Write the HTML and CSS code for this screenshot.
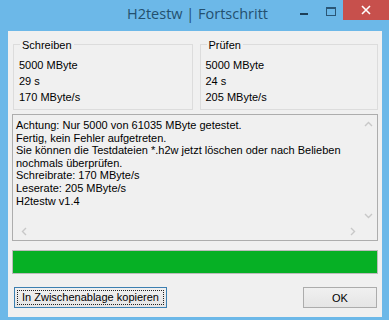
FILE: index.html
```html
<!DOCTYPE html>
<html lang="de">

<head>
    <meta charset="UTF-8">
    <link rel="stylesheet" href="styles.css">
    <title>H2testw | Fortschritt</title>
</head>

<body>
    <div class="window">
        <div class="titlebar">
            <span class="title">H2testw | Fortschritt</span>
            <div class="caption-btns">
                <span class="cap-min"></span>
                <span class="cap-max"></span>
                <span class="cap-close">
                    <svg width="10" height="10" viewBox="0 0 10 10">
                        <path d="M1 1 L9 9 M9 1 L1 9" stroke="#ffffff" stroke-width="1.6" />
                    </svg>
                </span>
            </div>
        </div>

        <div class="client">
            <div class="groups">
                <div class="group group-write">
                    <span class="group-label">Schreiben</span>
                    <div>5000 MByte</div>
                    <div>29 s</div>
                    <div>170 MByte/s</div>
                </div>
                <div class="group group-verify">
                    <span class="group-label">Prüfen</span>
                    <div>5000 MByte</div>
                    <div>24 s</div>
                    <div>205 MByte/s</div>
                </div>
            </div>

            <div class="log">
                <div class="log-text">
                    <div>Achtung: Nur 5000 von 61035 MByte getestet.</div>
                    <div>Fertig, kein Fehler aufgetreten.</div>
                    <div>Sie können die Testdateien *.h2w jetzt löschen oder nach Belieben</div>
                    <div>nochmals überprüfen.</div>
                    <div>Schreibrate: 170 MByte/s</div>
                    <div>Leserate: 205 MByte/s</div>
                    <div>H2testw v1.4</div>
                </div>
                <div class="vscroll">
                    <svg width="9" height="6" viewBox="0 0 9 6">
                        <path d="M1 5 L4.5 1.5 L8 5" fill="none" stroke="#c8c8c8" stroke-width="1.4" />
                    </svg>
                    <svg width="9" height="6" viewBox="0 0 9 6">
                        <path d="M1 1 L4.5 4.5 L8 1" fill="none" stroke="#c8c8c8" stroke-width="1.4" />
                    </svg>
                </div>
                <div class="hscroll">
                    <svg width="6" height="9" viewBox="0 0 6 9">
                        <path d="M5 1 L1.5 4.5 L5 8" fill="none" stroke="#c8c8c8" stroke-width="1.4" />
                    </svg>
                    <svg width="6" height="9" viewBox="0 0 6 9">
                        <path d="M1 1 L4.5 4.5 L1 8" fill="none" stroke="#c8c8c8" stroke-width="1.4" />
                    </svg>
                </div>
            </div>

            <div class="progress">
                <div class="progress-fill" style="width: 100%"></div>
            </div>

            <div class="btn-row">
                <button class="btn btn-copy"><span>In Zwischenablage kopieren</span></button>
                <button class="btn btn-ok">OK</button>
            </div>
        </div>
    </div>
</body>

</html>
```

FILE: styles.css
```css
body {
    margin: 0;
    font-family: "Liberation Sans", Arial, sans-serif;
    font-size: 11px;
    color: #000000;
    background-color: #6cb8e8;
}

.window {
    width: 389px;
    height: 320px;
    background-color: #6cb8e8;
    display: flex;
    flex-direction: column;
}

.titlebar {
    height: 31px;
    position: relative;
    display: flex;
    justify-content: center;
}

.title {
    font-family: "Open Sans", "Noto Sans", sans-serif;
    font-size: 14.5px;
    color: #23506f;
    margin-top: 4px;
    margin-left: 6px;
}

.caption-btns {
    position: absolute;
    top: 0;
    right: 0;
    display: flex;
    align-items: flex-start;
}

.cap-min {
    width: 8px;
    height: 2px;
    background-color: #1d3f58;
    margin-top: 13px;
    margin-right: 18px;
}

.cap-max {
    width: 8px;
    height: 6px;
    border: 1px solid #2a5676;
    border-top-width: 2px;
    margin-top: 7px;
    margin-right: 7px;
}

.cap-close {
    width: 46px;
    height: 20px;
    background-color: #c7504c;
    display: flex;
    justify-content: center;
    align-items: center;
}

.client {
    margin: 0 7px 3px 8px;
    flex: 1;
    background-color: #f0f0f0;
    padding: 13px 4px 0 4px;
    display: flex;
    flex-direction: column;
}

.groups {
    display: flex;
    gap: 7px;
    padding-left: 1px;
}

.group {
    position: relative;
    border: 1px solid #dcdcdc;
    padding: 12px 0 0 5px;
    box-sizing: border-box;
    height: 66px;
    line-height: 16px;
}

.group-write {
    width: 180px;
}

.group-verify {
    width: 179px;
}

.group-label {
    position: absolute;
    top: -8px;
    left: 6px;
    padding: 0 2px;
    background-color: #f0f0f0;
}

.log {
    margin-top: 4px;
    height: 127px;
    border: 1px solid #adadad;
    box-sizing: border-box;
    background-color: #f0f0f0;
    position: relative;
}

.log-text {
    padding: 4px 0 0 3px;
    line-height: 12.6px;
    white-space: nowrap;
}

.vscroll {
    position: absolute;
    top: 0;
    right: 0;
    width: 17px;
    height: 108px;
    display: flex;
    flex-direction: column;
    justify-content: space-between;
    align-items: center;
    padding: 6px 0 4px 0;
    box-sizing: border-box;
}

.hscroll {
    position: absolute;
    left: 0;
    bottom: 0;
    width: 348px;
    height: 17px;
    display: flex;
    justify-content: space-between;
    align-items: center;
    padding: 0 5px 0 8px;
    box-sizing: border-box;
}

.progress {
    margin-top: 9px;
    height: 24px;
    border: 1px solid #bcbcbc;
    box-sizing: border-box;
    background-color: #e6e6e6;
    display: flex;
}

.progress-fill {
    background-color: #06b025;
}

.btn-row {
    margin-top: 13px;
    display: flex;
    justify-content: space-between;
    padding: 0 0 0 2px;
}

.btn {
    height: 21px;
    font-family: inherit;
    font-size: 11px;
    color: #000000;
    background: linear-gradient(#f0f0f0, #e5e5e5);
    border: 1px solid #acacac;
    padding: 0;
    white-space: nowrap;
}

.btn-copy {
    width: 153px;
    border-color: #3c7fb1;
    padding: 2px;
}

.btn-copy span {
    display: block;
    height: 100%;
    border: 1px dotted #222222;
    box-sizing: border-box;
    line-height: 13px;
}

.btn-ok {
    width: 74px;
    margin-right: 1px;
}
```
